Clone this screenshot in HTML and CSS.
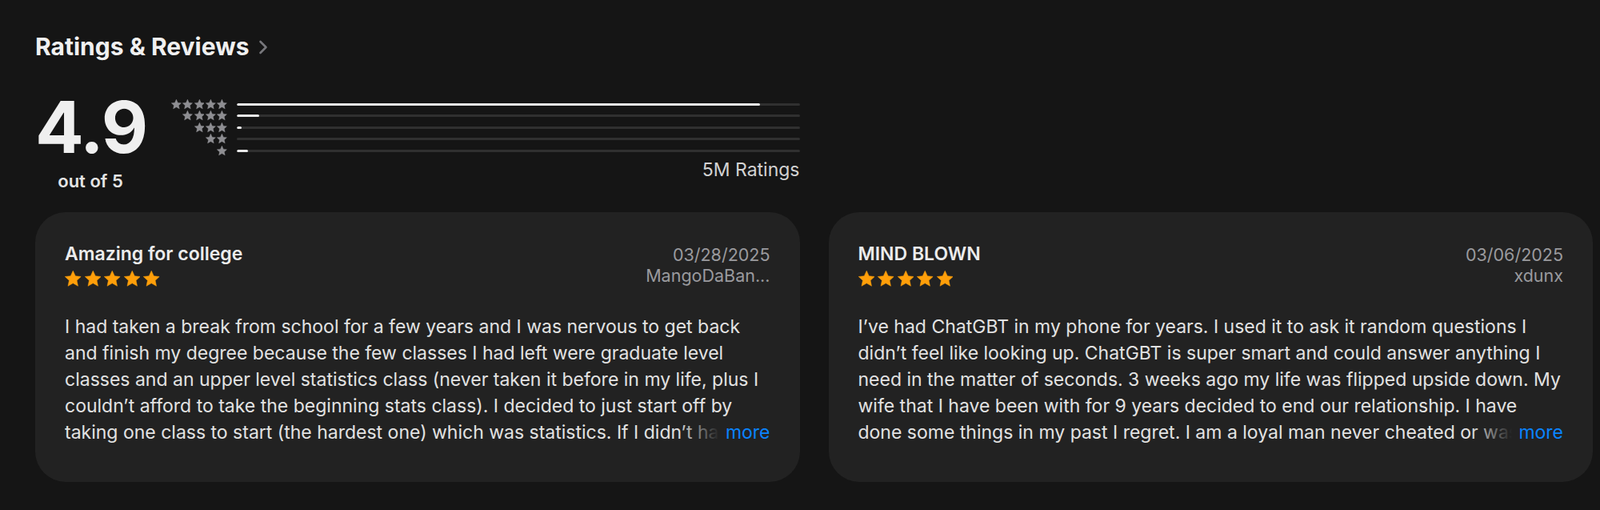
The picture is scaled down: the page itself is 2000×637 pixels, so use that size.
FILE: index.html
```html
<!DOCTYPE html>
<html lang="en">
<head>
<meta charset="utf-8" />
<title>Ratings &amp; Reviews</title>
<link rel="stylesheet" href="styles.css">
</head>
<body>
<svg width="0" height="0" class="defs">
	<symbol id="star" viewBox="1.6 1.6 20.8 20.8">
		<path d="M12 1.8l3.05 6.6 7.15.8-5.3 4.9 1.45 7.1L12 17.6l-6.35 3.6 1.45-7.1-5.3-4.9 7.15-.8z" stroke-linejoin="round"/>
	</symbol>
</svg>

<div class="page">
	<h2 class="section-title">Ratings &amp; Reviews
		<svg class="chevron" viewBox="0 0 12 18"><path d="M2.5 2l7 7-7 7"/></svg>
	</h2>

	<div class="summary">
		<div class="score">
			<div class="score-value">4.9</div>
			<div class="score-label">out of 5</div>
		</div>
		<div class="histogram">
			<div class="rows">
				<div class="row-stars"><svg><use href="#star"/></svg><svg><use href="#star"/></svg><svg><use href="#star"/></svg><svg><use href="#star"/></svg><svg><use href="#star"/></svg></div>
				<div class="bar"><span style="width:93%"></span></div>
				<div class="row-stars"><svg><use href="#star"/></svg><svg><use href="#star"/></svg><svg><use href="#star"/></svg><svg><use href="#star"/></svg></div>
				<div class="bar"><span style="width:4%"></span></div>
				<div class="row-stars"><svg><use href="#star"/></svg><svg><use href="#star"/></svg><svg><use href="#star"/></svg></div>
				<div class="bar"><span style="width:0.9%"></span></div>
				<div class="row-stars"><svg><use href="#star"/></svg><svg><use href="#star"/></svg></div>
				<div class="bar"><span style="width:0%"></span></div>
				<div class="row-stars"><svg><use href="#star"/></svg></div>
				<div class="bar"><span style="width:2%"></span></div>
			</div>
			<div class="total">5M Ratings</div>
		</div>
	</div>

	<div class="reviews">
		<div class="card">
			<div class="card-head">
				<div>
					<div class="review-title">Amazing for college</div>
					<div class="stars"><svg><use href="#star"/></svg><svg><use href="#star"/></svg><svg><use href="#star"/></svg><svg><use href="#star"/></svg><svg><use href="#star"/></svg></div>
				</div>
				<div class="meta">
					<div>03/28/2025</div>
					<div>MangoDaBan...</div>
				</div>
			</div>
			<div class="review-body">
				I had taken a break from school for a few years and I was nervous to get back and finish my degree because the few classes I had left were graduate level classes and an upper level statistics class (never taken it before in my life, plus I couldn’t afford to take the beginning stats class). I decided to just start off by taking one class to start (the hardest one) which was statistics. If I didn’t have this app I would have been lost from the very first week of the class.
				<a class="more" href="#">more</a>
			</div>
		</div>

		<div class="card">
			<div class="card-head">
				<div>
					<div class="review-title">MIND BLOWN</div>
					<div class="stars"><svg><use href="#star"/></svg><svg><use href="#star"/></svg><svg><use href="#star"/></svg><svg><use href="#star"/></svg><svg><use href="#star"/></svg></div>
				</div>
				<div class="meta">
					<div>03/06/2025</div>
					<div>xdunx</div>
				</div>
			</div>
			<div class="review-body">
				I’ve had ChatGBT in my phone for years. I used it to ask it random questions I didn’t feel like looking up. ChatGBT is super smart and could answer anything I need in the matter of seconds. 3 weeks ago my life was flipped upside down. My wife that I have been with for 9 years decided to end our relationship. I have done some things in my past I regret. I am a loyal man never cheated or was ever abusive in any way.
				<a class="more" href="#">more</a>
			</div>
		</div>
	</div>
</div>
</body>
</html>
```

FILE: styles.css
```css
*{box-sizing:border-box;}
html, body{margin:0; padding:0; height:100%;}
body{background:#151515; color:#f2f2f2; font-family:"Inter", "Noto Sans", sans-serif; -webkit-font-smoothing:antialiased;}
.defs{position:absolute;}

.page{padding:40px 9px 0 44px;}

.section-title{margin:0; font-size:30px; line-height:36px; font-weight:700; color:#f0f0f0; display:flex; align-items:center;}
.chevron{width:12px; height:18px; margin-left:12px; margin-top:2px; fill:none; stroke:#77777b; stroke-width:2.6; stroke-linecap:round; stroke-linejoin:round;}

.summary{display:flex; width:calc((100% - 36px) / 2); margin-top:38px;}
.score{width:138px; text-align:center;}
.score-value{font-size:90px; line-height:90px; font-weight:700; letter-spacing:-2px; color:#efefef;}
.score-label{font-size:22px; line-height:26px; font-weight:600; margin-top:9px; color:#e4e4e4;}

.histogram{flex:1; margin-left:31px; padding-top:9px;}
.rows{display:grid; grid-template-columns:71px 1fr; grid-auto-rows:14.5px; column-gap:12px; align-items:center;}
.row-stars{display:flex; justify-content:flex-end; gap:1.5px;}
.row-stars svg{width:12.8px; height:12.8px; fill:#8e8e92; stroke:#8e8e92; stroke-width:0.5;}
.bar{height:3.3px; background:#303030; border-radius:2px; overflow:hidden;}
.bar span{display:block; height:100%; background:#e8e8e8; border-radius:2px;}
.total{text-align:right; font-size:23px; line-height:24px; margin-top:4px; color:#d2d2d2;}

.reviews{display:grid; grid-template-columns:1fr 1fr; column-gap:36px; margin-top:26px;}
.card{background:#222222; border-radius:38px; padding:38px 37px 45px;}
.card-head{display:flex; justify-content:space-between; align-items:flex-start;}
.review-title{font-size:23px; line-height:28px; font-weight:600; color:#ececec;}
.stars{display:flex; gap:4px; margin-top:7px;}
.stars svg{width:20.5px; height:20.5px; fill:#ff9f0a; stroke:#ff9f0a; stroke-width:0.5;}
.meta{text-align:right; font-size:21.5px; line-height:26px; padding-top:2px; color:#9a9a9e;}

.review-body{position:relative; margin-top:33px; font-size:23px; line-height:33px; color:#e2e2e2; display:-webkit-box; -webkit-box-orient:vertical; -webkit-line-clamp:5; overflow:hidden;}
.more{position:absolute; right:0; bottom:0; padding-left:60px; color:#0a84ff; text-decoration:none; background:linear-gradient(to right, rgba(34,34,34,0), #222222 52px);}
```
